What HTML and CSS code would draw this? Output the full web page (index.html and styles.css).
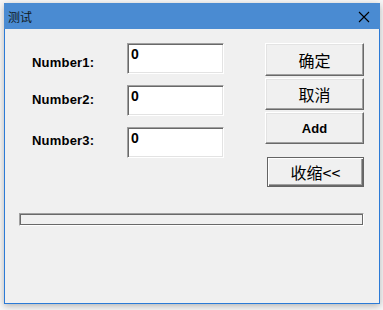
FILE: index.html
```html
<!DOCTYPE html>
<html>
<head>
<meta charset="utf-8">
<link rel="stylesheet" href="styles.css">
</head>
<body>
<div class="window">
  <div class="titlebar">
    <span class="title">测试</span>
    <svg class="close" width="12" height="12" viewBox="0 0 12 12"><path d="M1 1L11 11M11 1L1 11" stroke="#000" stroke-width="1.1" fill="none"/></svg>
  </div>
  <div class="client">
    <div class="top">
      <div class="form">
        <div class="lbl r1">Number1:</div><div class="field">0</div>
        <div class="lbl r2">Number2:</div><div class="field">0</div>
        <div class="lbl r3">Number3:</div><div class="field">0</div>
      </div>
      <div class="buttons">
        <div class="btn first">确定</div>
        <div class="btn">取消</div>
        <div class="btn bold">Add</div>
        <div class="btn def">收缩&lt;&lt;</div>
      </div>
    </div>
    <div class="progress"></div>
  </div>
</div>
</body>
</html>
```
FILE: styles.css
```css
html, body { margin: 0; padding: 0; }
body {
  background: #f7f7f7;
  width: 383px;
  height: 310px;
  overflow: hidden;
  font-family: "Liberation Sans", Arial, sans-serif;
}
.window {
  margin: 3px 0 0 4px;
  width: 374px;
  height: 300px;
  border: 1px solid #2b7ad6;
  border-top: none;
  background: #f0f0f0;
  box-shadow: 0 2px 7px rgba(0,0,0,0.28);
  display: flex;
  flex-direction: column;
}
.titlebar {
  height: 26px;
  margin: 0 -1px;
  background: #4a8bd2;
  display: flex;
  align-items: center;
  justify-content: space-between;
  padding: 0 10px 0 4px;
  box-sizing: border-box;
  flex: none;
}
.title {
  font-family: "Noto Sans CJK SC", sans-serif;
  font-size: 12px;
  color: #101820;
  line-height: 14px;
  margin-top: 1px;
}
.close { display: block; margin-top: 1px; }
.client {
  flex: 1;
  display: flex;
  flex-direction: column;
}
.top {
  display: flex;
  padding: 14px 0 0 27px;
}
.form {
  display: grid;
  grid-template-columns: 95px 97px;
  grid-auto-rows: 31px;
  row-gap: 11px;
}
.lbl {
  font-weight: bold;
  font-size: 13px;
  line-height: 15px;
  color: #000;
  letter-spacing: 0.2px;
}
.r1 { padding-top: 12px; }
.r2 { padding-top: 7px; }
.r3 { padding-top: 6px; }
.field {
  background: #fff;
  border: 1px solid;
  border-color: #a0a0a0 #fff #fff #a0a0a0;
  box-shadow: inset 1px 1px #696969, inset -1px -1px #e3e3e3;
  font-weight: bold;
  font-size: 14px;
  line-height: 16px;
  padding: 2px 0 0 3px;
  box-sizing: border-box;
  color: #000;
}
.buttons {
  margin-left: 41px;
  width: 99px;
  display: flex;
  flex-direction: column;
  gap: 2px;
}
.btn {
  height: 32px;
  box-sizing: border-box;
  border: 1px solid;
  border-color: #fff #696969 #696969 #fff;
  box-shadow: inset -1px -1px #a0a0a0, inset 1px 1px #e3e3e3;
  background: #f0f0f0;
  display: flex;
  align-items: center;
  justify-content: center;
  font-family: "Noto Sans CJK SC", sans-serif;
  font-size: 16px;
  color: #000;
}
.btn.first { height: 33px; }
.btn.bold {
  font-family: "Liberation Sans", Arial, sans-serif;
  font-weight: bold;
  font-size: 13px;
}
.btn.def {
  margin: 11px 0 0 2px;
  width: 97px;
  height: 30px;
  border: 1px solid #646464;
  box-shadow: inset 1px 1px #fff, inset -1px -1px #696969, inset -2px -2px #a0a0a0;
}
.progress {
  margin: 26px 0 0 14px;
  width: 345px;
  height: 13px;
  box-sizing: border-box;
  border: 1px solid;
  border-color: #a0a0a0 #fff #fff #a0a0a0;
  box-shadow: inset 0 0 0 1px #696969;
  background: #f0f0f0;
}
```
